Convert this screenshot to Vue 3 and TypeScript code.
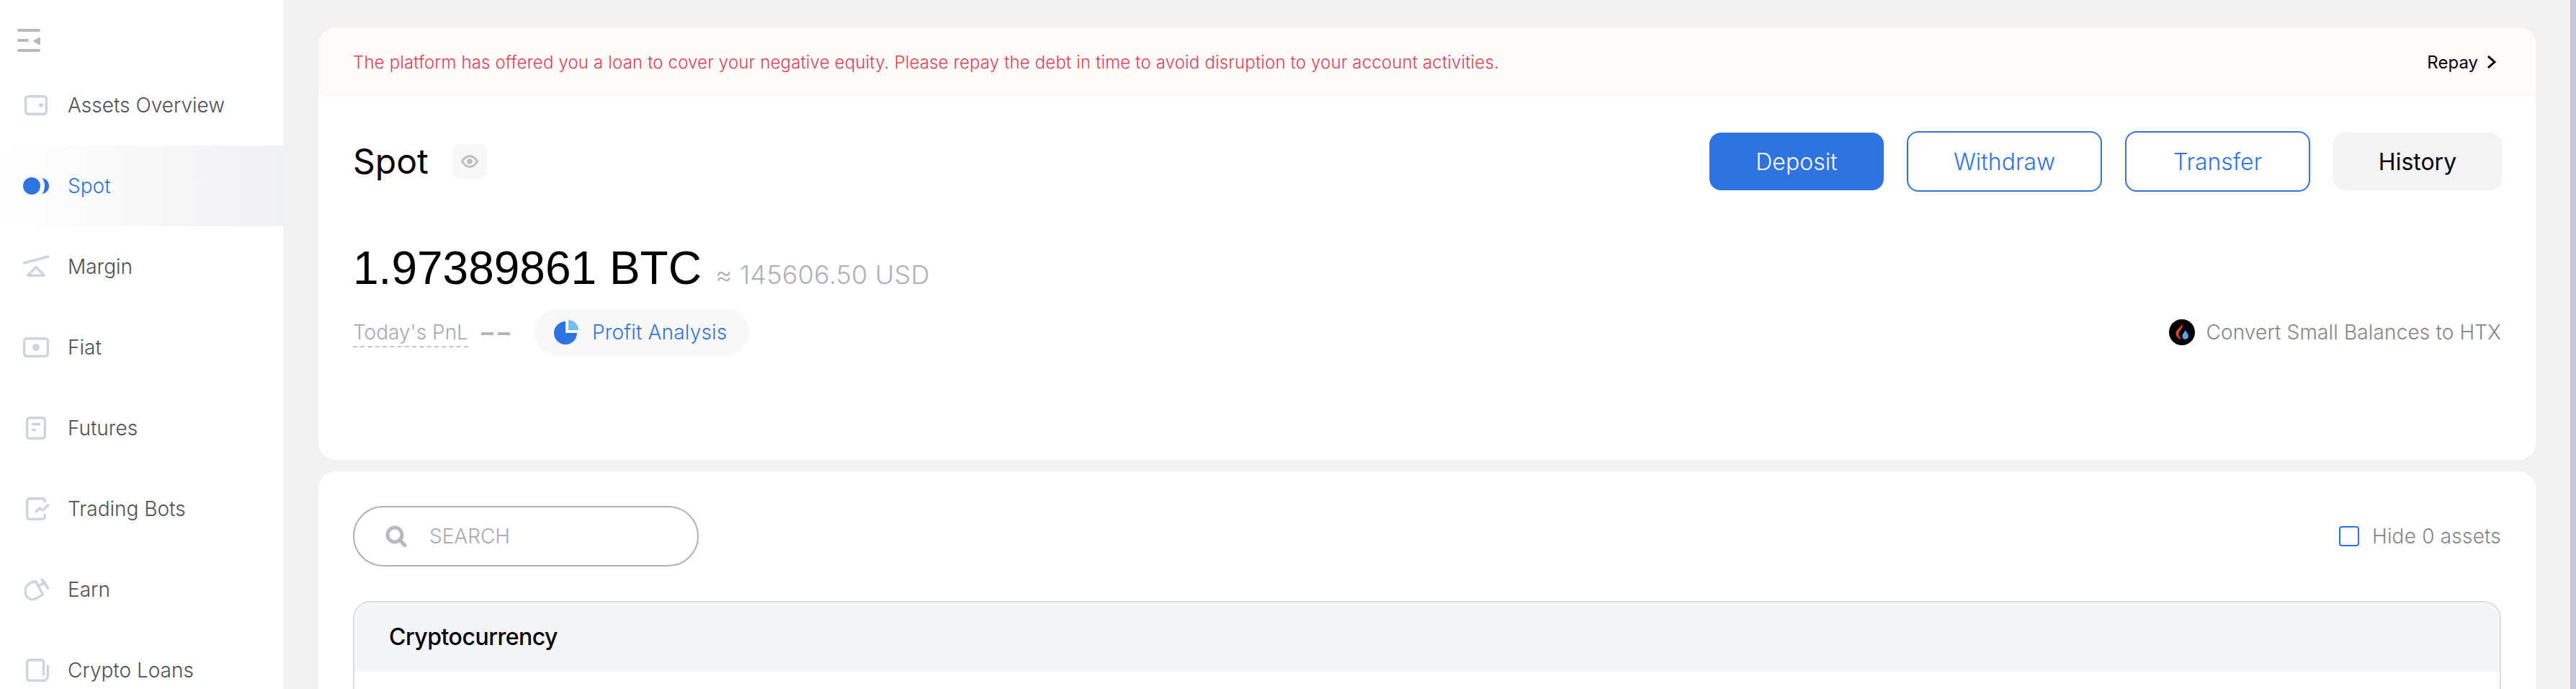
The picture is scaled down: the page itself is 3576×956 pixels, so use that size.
<script setup lang="ts">
interface NavItem { label: string; icon: string; active?: boolean }
const nav: NavItem[] = [
  { label: 'Assets Overview', icon: 'wallet' },
  { label: 'Spot', icon: 'spot', active: true },
  { label: 'Margin', icon: 'margin' },
  { label: 'Fiat', icon: 'fiat' },
  { label: 'Futures', icon: 'futures' },
  { label: 'Trading Bots', icon: 'bots' },
  { label: 'Earn', icon: 'earn' },
  { label: 'Crypto Loans', icon: 'loans' },
]
</script>

<template>
  <div class="page">
    <aside class="side">
      <div class="side-top">
        <svg class="menu-ico" width="32" height="32" viewBox="0 0 32 32">
          <rect x="0" y="0" width="32" height="4" rx="2" fill="#b8b8be" />
          <rect x="0" y="14" width="16" height="4" rx="2" fill="#b8b8be" />
          <rect x="0" y="28" width="32" height="4" rx="2" fill="#b8b8be" />
          <path d="M32 10.500v11c0 .8-.9 1.200-1.500.8l-8-4.500c-.6-.4-.6-1.200 0-1.600l8-4.500c.6-.4 1.500 0 1.500.8z" fill="#b8b8be" />
        </svg>
      </div>
      <nav class="nav">
        <div v-for="item in nav" :key="item.label" class="nav-item" :class="{ active: item.active }">
          <svg class="nav-ico" width="36" height="36" viewBox="0 0 36 36" fill="none" stroke="#cfd4dc" stroke-width="3.4">
            <template v-if="item.icon === 'wallet'">
              <rect x="3.700" y="5.700" width="28.600" height="24.600" rx="3.500" />
              <circle cx="25" cy="18" r="3" fill="#cfd4dc" stroke="none" />
            </template>
            <template v-else-if="item.icon === 'spot'">
              <circle cx="12" cy="18" r="12" fill="#2f73e0" stroke="none" />
              <path d="M26.500 7C32.500 8 36 12.500 36 18s-3.500 10-9.500 11C28.500 26 30 22.500 30 18s-1.500-8-3.500-11z" fill="#2f73e0" stroke="none" />
            </template>
            <template v-else-if="item.icon === 'margin'">
              <path d="M1 13 35 4" stroke-linecap="round" />
              <path d="M18 18.500 29.500 30.300H6.500z" stroke-linejoin="round" />
            </template>
            <template v-else-if="item.icon === 'fiat'">
              <rect x="1.700" y="5.700" width="32.600" height="24.600" rx="3.500" />
              <circle cx="18" cy="18" r="5" fill="#cfd4dc" stroke="none" />
            </template>
            <template v-else-if="item.icon === 'futures'">
              <rect x="5.700" y="3.700" width="24.600" height="28.600" rx="3.500" />
              <path d="M12 12.500h12M12 20.500h6" />
            </template>
            <template v-else-if="item.icon === 'bots'">
              <path d="M30.300 9V7A3.300 3.300 0 0 0 27 3.700H9A3.300 3.300 0 0 0 5.700 7v22A3.300 3.300 0 0 0 9 32.300h18a3.300 3.300 0 0 0 3.300-3.300v-4" />
              <path d="M18 22l5-5 4 3 8-7" stroke-linecap="round" stroke-linejoin="round" />
            </template>
            <template v-else-if="item.icon === 'earn'">
              <path d="M17.500 6.500C9.500 7.500 3 13 3 20.500c0 5 3 9.500 7.500 10.800 2.500.8 5 .5 7.500-.8l9.500-5.500z" stroke-linejoin="round" />
              <path d="M26 4l8.500 12M22.500 12.500l8-4.500" stroke-linecap="round" />
            </template>
            <template v-else>
              <path d="M25.500 3.700H8.700a3 3 0 0 0-3 3v22.600a3 3 0 0 0 3 3H28a6 6 0 0 0 6.300-6V12M25.500 3.700a3 3 0 0 1 3 3V24" stroke-linecap="round" />
            </template>
          </svg>
          <span class="nav-label">{{ item.label }}</span>
        </div>
      </nav>
    </aside>

    <main class="main">
      <section class="card top-card">
        <div class="banner">
          <span class="warn">The platform has offered you a loan to cover your negative equity. Please repay the debt in time to avoid disruption to your account activities.</span>
          <span class="repay">Repay
            <svg width="14" height="20" viewBox="0 0 14 20" fill="none" stroke="#000" stroke-width="3"><path d="M2 2l9 8-9 8" /></svg>
          </span>
        </div>
        <div class="head-row">
          <div class="title-wrap">
            <h1 class="title">Spot</h1>
            <span class="eye-box">
              <svg width="24" height="18" viewBox="0 0 24 18" fill="none">
                <path d="M1.500 9C4.500 4 8 1.600 12 1.600S19.500 4 22.500 9C19.500 14 16 16.400 12 16.400S4.500 14 1.500 9z" stroke="#bdbdbd" stroke-width="3" />
                <circle cx="12" cy="9" r="3.800" fill="#bdbdbd" />
              </svg>
            </span>
          </div>
          <div class="btns">
            <button class="btn primary">Deposit</button>
            <button class="btn outline w-withdraw">Withdraw</button>
            <button class="btn outline w-transfer">Transfer</button>
            <button class="btn ghost">History</button>
          </div>
        </div>
        <div class="balance">
          <span class="btc">1.97389861 BTC</span>
          <span class="usd">≈ 145606.50 USD</span>
        </div>
        <div class="pnl-row">
          <div class="pnl-left">
            <span class="pnl-label">Today's PnL</span>
            <span class="pnl-dash"></span>
            <div class="pill">
              <svg width="34" height="34" viewBox="0 0 34 34">
                <path d="M16 2A16 16 0 1 0 32 18H16z" fill="#2f73e0" />
                <path d="M20 0A14 14 0 0 1 34 14H20z" fill="#74bdfb" />
              </svg>
              <span>Profit Analysis</span>
            </div>
          </div>
          <div class="convert">
            <svg width="36" height="36" viewBox="0 0 36 36">
              <circle cx="18" cy="18" r="18" fill="#000" />
              <path d="M18 6C19.500 11 17 14 14.500 17 12.500 19.500 13.500 24 17.500 28 12.500 27 9.500 23.500 9.500 19.500 9.500 14 17 12 18 6z" fill="#e0452c" />
              <path d="M22.500 15C24 18 27 20 27 23.500 27 26 25 27.800 22.500 27.800 20 27.800 18.500 26 18.500 23.500 18.500 20 21.500 18.500 22.500 15z" fill="#54a8ee" />
            </svg>
            <span>Convert Small Balances to HTX</span>
          </div>
        </div>
      </section>

      <section class="card list-card">
        <div class="tools">
          <div class="search">
            <svg width="30" height="30" viewBox="0 0 30 30" fill="none" stroke="#b8b8be" stroke-width="5">
              <circle cx="13" cy="13" r="10" />
              <path d="M20 20l7 8" stroke-linecap="round" />
            </svg>
            <span class="search-text">SEARCH</span>
          </div>
          <label class="hide">
            <span class="check"></span>
            <span>Hide 0 assets</span>
          </label>
        </div>
        <div class="table">
          <div class="table-head">Cryptocurrency</div>
        </div>
      </section>
    </main>
    <div class="scrollbar"></div>
  </div>
</template>

<style>
html, body { margin: 0; padding: 0; height: 100%; overflow: hidden; }
</style>

<style scoped>
.page {
  display: flex;
  height: 956px;
  overflow: hidden;
  background: #f2f2f2;
  font-family: Inter, "Liberation Sans", sans-serif;
  font-weight: 300;
}
.side {
  width: 394px;
  flex: none;
  background: #fff;
}
.side-top { height: 90px; padding: 40px 0 0 24px; box-sizing: border-box; }
.menu-ico { display: block; }
.nav-item {
  height: 112px;
  display: flex;
  align-items: center;
  padding-left: 32px;
  gap: 26px;
  color: #4f4f52;
  font-size: 28px;
}
.nav-item.active {
  color: #2f73e0;
  background: linear-gradient(90deg, #fff 0%, #f0f1f3 100%);
}
.nav-ico { flex: none; }
.main {
  flex: 1;
  min-width: 0;
  padding: 38px 48px 0;
  display: flex;
  flex-direction: column;
  gap: 16px;
}
.card { background: #fff; border-radius: 24px; overflow: hidden; flex: none; }
.top-card { height: 600px; }
.banner {
  height: 96px;
  background: #fffafa;
  display: flex;
  align-items: center;
  justify-content: space-between;
  padding: 0 48px 0 48px;
  font-size: 24px;
  color: #dc4455;
}
.warn { letter-spacing: 0.155px; }
.repay { display: flex; align-items: center; gap: 12px; color: #000; margin-right: 6px; font-weight: 400; letter-spacing: 0; }
.head-row {
  display: flex;
  justify-content: space-between;
  align-items: center;
  padding: 48px 47px 0 48px;
  height: 84px;
}
.title-wrap { display: flex; align-items: center; gap: 33px; }
.title { margin: 0; font-size: 48px; font-weight: 400; color: #000; line-height: 48px; }
.eye-box {
  width: 48px; height: 48px; border-radius: 10px; background: #f8f8f8;
  display: flex; align-items: center; justify-content: center;
}
.btns { display: flex; gap: 32px; align-items: center; }
.btn {
  font: inherit;
  font-size: 32px;
  height: 80px;
  border-radius: 16px;
  border: 0;
  padding: 0;
  box-sizing: border-box;
}
.primary { width: 242px; background: #2f73e0; color: #fff; }
.outline { height: 84px; background: #fff; border: 2px solid #2f73e0; color: #2f73e0; }
.w-withdraw { width: 271px; }
.w-transfer { width: 257px; }
.ghost { width: 234px; background: #f4f4f4; color: #000; font-weight: 400; }
.balance {
  display: flex;
  align-items: baseline;
  padding: 66px 48px 0;
  gap: 19px;
}
.btc { font-size: 64px; line-height: 80px; color: #000; font-family: "Liberation Sans", sans-serif; font-weight: 400; }
.usd { font-size: 36px; color: #b0b0b8; letter-spacing: 0.2px; }
.pnl-row {
  display: flex;
  justify-content: space-between;
  align-items: center;
  padding: 17px 48px 0;
}
.pnl-left { display: flex; align-items: center; }
.pnl-label {
  font-size: 28px; color: #a8a8b0;
  border-bottom: 2px dashed #c4c4ca;
  line-height: 38px;
  margin-top: 2px;
}
.pnl-dash {
  width: 40px; height: 4px; margin: 4px 34px 0 18px;
  background: linear-gradient(90deg, #b4b4bc 0 17px, transparent 17px 23px, #b4b4bc 23px 40px);
}
.pill {
  height: 64px;
  width: 298px;
  box-sizing: border-box;
  border-radius: 32px;
  background: #f8f8f8;
  display: flex;
  align-items: center;
  gap: 19px;
  padding-left: 27px;
  font-size: 28px;
  color: #2f73e0;
  letter-spacing: 0.2px;
}
.convert { display: flex; align-items: center; gap: 15px; font-size: 28px; color: #858585; letter-spacing: 0.15px; }
.list-card { padding: 48px 48px 0; height: 400px; box-sizing: border-box; }
.tools { display: flex; justify-content: space-between; align-items: center; height: 84px; }
.search {
  width: 480px; height: 84px; box-sizing: border-box;
  border: 2px solid #b0b0b8; border-radius: 42px;
  display: flex; align-items: center; gap: 31px; padding-left: 43px;
}
.search-text { font-size: 28px; color: #a8a8b0; }
.hide { display: flex; align-items: center; gap: 18px; font-size: 28px; color: #858585; letter-spacing: 0.2px; }
.check { width: 28px; height: 28px; box-sizing: border-box; border: 2px solid #2f73e0; border-radius: 4px; }
.table {
  margin-top: 48px;
  border: 2px solid #dedede;
  border-bottom: 0;
  border-radius: 24px 24px 0 0;
  overflow: hidden;
  height: 300px;
}
.table-head {
  height: 96px;
  box-sizing: border-box;
  padding: 0 0 2px 48px;
  background: #f4f5f7;
  display: flex; align-items: center;
  font-size: 32px; font-weight: 500; color: #000;
  letter-spacing: -0.5px;
}
.scrollbar { width: 8px; flex: none; background: #c5c9d5; }
</style>
